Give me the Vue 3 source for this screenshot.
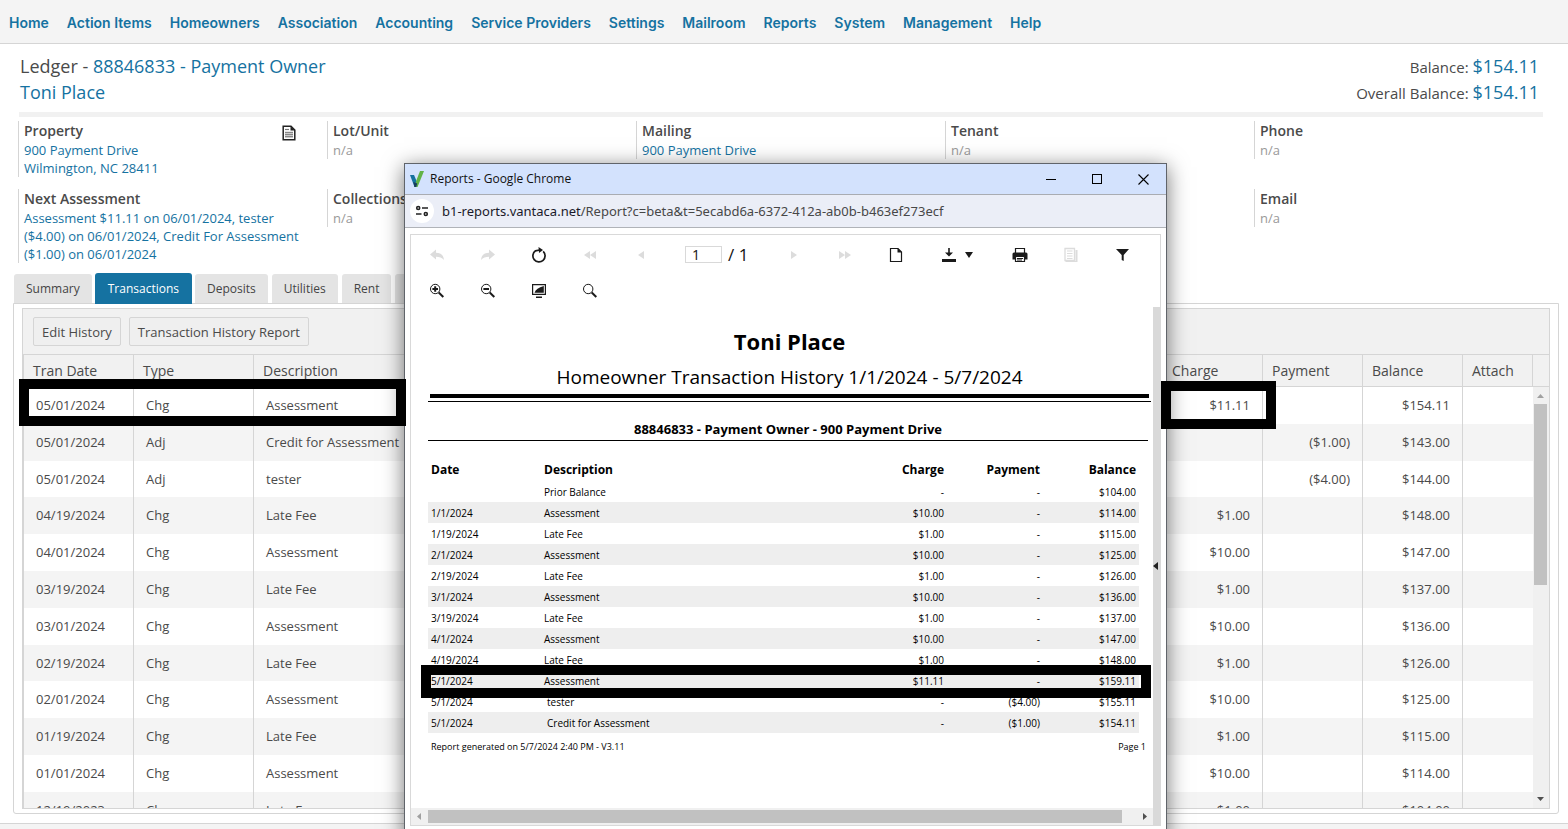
<script setup>
const nav = ['Home', 'Action Items', 'Homeowners', 'Association', 'Accounting', 'Service Providers', 'Settings', 'Mailroom', 'Reports', 'System', 'Management', 'Help']
const tabs = ['Summary', 'Transactions', 'Deposits', 'Utilities', 'Rent', 'Notes']

const info = [
  { title: 'Property', links: ['900 Payment Drive', 'Wilmington, NC 28411'], icon: true },
  { title: 'Lot/Unit' },
  { title: 'Mailing', links: ['900 Payment Drive'] },
  { title: 'Tenant' },
  { title: 'Phone' },
  { title: 'Next Assessment', links: ['Assessment $11.11 on 06/01/2024, tester ($4.00) on 06/01/2024, Credit For Assessment ($1.00) on 06/01/2024'] },
  { title: 'Collections' },
  {},
  {},
  { title: 'Email' },
]

const rows = [
  ['05/01/2024', 'Chg', 'Assessment', '$11.11', '', '$154.11'],
  ['05/01/2024', 'Adj', 'Credit for Assessment', '', '($1.00)', '$143.00'],
  ['05/01/2024', 'Adj', 'tester', '', '($4.00)', '$144.00'],
  ['04/19/2024', 'Chg', 'Late Fee', '$1.00', '', '$148.00'],
  ['04/01/2024', 'Chg', 'Assessment', '$10.00', '', '$147.00'],
  ['03/19/2024', 'Chg', 'Late Fee', '$1.00', '', '$137.00'],
  ['03/01/2024', 'Chg', 'Assessment', '$10.00', '', '$136.00'],
  ['02/19/2024', 'Chg', 'Late Fee', '$1.00', '', '$126.00'],
  ['02/01/2024', 'Chg', 'Assessment', '$10.00', '', '$125.00'],
  ['01/19/2024', 'Chg', 'Late Fee', '$1.00', '', '$115.00'],
  ['01/01/2024', 'Chg', 'Assessment', '$10.00', '', '$114.00'],
  ['12/19/2023', 'Chg', 'Late Fee', '$1.00', '', '$104.00'],
]

const report = [
  ['', 'Prior Balance', '-', '-', '$104.00'],
  ['1/1/2024', 'Assessment', '$10.00', '-', '$114.00'],
  ['1/19/2024', 'Late Fee', '$1.00', '-', '$115.00'],
  ['2/1/2024', 'Assessment', '$10.00', '-', '$125.00'],
  ['2/19/2024', 'Late Fee', '$1.00', '-', '$126.00'],
  ['3/1/2024', 'Assessment', '$10.00', '-', '$136.00'],
  ['3/19/2024', 'Late Fee', '$1.00', '-', '$137.00'],
  ['4/1/2024', 'Assessment', '$10.00', '-', '$147.00'],
  ['4/19/2024', 'Late Fee', '$1.00', '-', '$148.00'],
  ['5/1/2024', 'Assessment', '$11.11', '-', '$159.11'],
  ['5/1/2024', 'tester', '-', '($4.00)', '$155.11', true],
  ['5/1/2024', 'Credit for Assessment', '-', '($1.00)', '$154.11', true],
]
</script>

<template>
  <div class="page">
    <nav class="nav">
      <a v-for="n in nav" :key="n" href="#">{{ n }}</a>
    </nav>

    <header class="head">
      <div>
        <div class="big">Ledger - <a href="#">88846833 - Payment Owner</a></div>
        <div class="big"><a href="#">Toni Place</a></div>
      </div>
      <div class="totals">
        <div>Balance: <a href="#">$154.11</a></div>
        <div>Overall Balance: <a href="#">$154.11</a></div>
      </div>
    </header>

    <section class="info">
      <div v-for="(c, i) in info" :key="i" :class="{ cell: c.title }">
        <template v-if="c.title">
          <div class="cell-title">
            <span>{{ c.title }}</span>
            <button v-if="c.icon" class="doc" aria-label="Property document">
              <svg width="14" height="16" viewBox="0 0 14 16"><path d="M1.2 1.2H9L12.8 5V14.8H1.2Z" fill="#fff" stroke="#222" stroke-width="1.5" /><path d="M8.5 1V5.5H13Z" fill="#222" /><path d="M3 4.5H7" stroke="#777" stroke-width="1.2" /><path d="M3 6.5H11V13H3Z" fill="#ccc" /><path d="M3 7.5H11M3 9.5H11M3 11.5H11" stroke="#888" /></svg>
            </button>
          </div>
          <template v-if="c.links"><a v-for="l in c.links" :key="l" href="#">{{ l }}</a></template>
          <span v-else class="na">n/a</span>
        </template>
      </div>
    </section>

    <div class="tabs">
      <button v-for="t in tabs" :key="t" :class="{ active: t === 'Transactions' }">{{ t }}</button>
    </div>

    <main class="panel">
      <div class="grid">
        <div class="toolbar">
          <button>Edit History</button>
          <button>Transaction History Report</button>
        </div>
        <div class="grid-body">
          <div class="clip">
            <table class="ledger">
              <colgroup><col class="c110"><col class="c120"><col><col class="c100"><col class="c100"><col class="c100"><col class="c70"></colgroup>
              <thead>
                <tr><th>Tran Date</th><th>Type</th><th>Description</th><th>Charge</th><th>Payment</th><th>Balance</th><th>Attach</th></tr>
              </thead>
              <tbody>
                <tr v-for="(r, i) in rows" :key="i">
                  <td v-for="(v, j) in r" :key="j" :class="{ num: j > 2 }">{{ v }}</td>
                  <td></td>
                </tr>
              </tbody>
            </table>
          </div>
          <div class="vscroll">
            <div class="vhead"></div>
            <div class="vtrack">
              <svg width="16" height="17" viewBox="0 0 16 17"><path d="M4 11H11L7.5 7Z" fill="#a0a0a0" /></svg>
              <div class="vthumb"></div>
              <svg width="16" height="17" viewBox="0 0 16 17"><path d="M4 6H11L7.5 10Z" fill="#505050" /></svg>
            </div>
          </div>
        </div>
      </div>
    </main>
    <footer class="foot"></footer>

    <section class="win">
      <div class="win-title">
        <svg width="16" height="18" viewBox="0 0 16 18"><path d="M1 5H5L8 12L7 17H5.5Z" fill="#15719f" /><path d="M11 1H15L8.5 17H5.5L7.5 10Z" fill="#62b346" /><path d="M4.4 12L8.3 13.5L7.2 17H5.4Z" fill="#173c5c" /></svg>
        <span>Reports - Google Chrome</span>
        <div class="win-btns">
          <button aria-label="Minimize"><svg width="11" height="11"><path d="M0 5.5H10" stroke="#000" /></svg></button>
          <button aria-label="Maximize"><svg width="11" height="11"><rect x=".5" y=".5" width="9" height="9" fill="none" stroke="#000" /></svg></button>
          <button aria-label="Close"><svg width="11" height="11"><path d="M.5 .5L10.5 10.5M10.5 .5L.5 10.5" stroke="#000" stroke-width="1.1" /></svg></button>
        </div>
      </div>
      <div class="addr">
        <span class="site"><svg width="14" height="12" viewBox="0 0 14 12" fill="none" stroke="#222" stroke-width="1.6"><circle cx="3.2" cy="3" r="1.5" /><path d="M7 3H13M1 9H6.5" /><circle cx="10.8" cy="9" r="1.5" /></svg></span>
        <span><span class="host">b1-reports.vantaca.net</span>/Report?c=beta&amp;t=5ecabd6a-6372-412a-ab0b-b463ef273ecf</span>
      </div>

      <div class="viewer">
        <div class="tools">
          <button class="off" aria-label="Back"><svg width="16" height="16" viewBox="0 0 16 16"><path d="M1 7.5L7 2.5V5.7C11.5 5.7 14.5 8 15 13C13 10.5 10.5 9.7 7 9.7V12.5Z" /></svg></button>
          <button class="off" aria-label="Forward"><svg width="16" height="16" viewBox="0 0 16 16"><path d="M15 7.5L9 2.5V5.7C4.5 5.7 1.5 8 1 13C3 10.5 5.5 9.7 9 9.7V12.5Z" /></svg></button>
          <button aria-label="Refresh"><svg width="16" height="16" viewBox="0 0 16 16"><path d="M12.2 4.4A6.1 6.1 0 1 1 4.5 3.8L8.5 3" fill="none" stroke="#1a1a1a" stroke-width="1.7" /><path d="M7.5 0L12 3L8 6Z" /></svg></button>
          <button class="off" aria-label="First page"><svg width="16" height="16" viewBox="0 0 16 16"><path d="M8 4V12L2 8ZM14 4V12L8 8Z" /></svg></button>
          <button class="off" aria-label="Previous page"><svg width="16" height="16" viewBox="0 0 16 16"><path d="M11 4V12L5 8Z" /></svg></button>
          <label class="pager"><input type="text" value="1" aria-label="Page number"><span>/ 1</span></label>
          <button class="off" aria-label="Next page"><svg width="16" height="16" viewBox="0 0 16 16"><path d="M5 4V12L11 8Z" /></svg></button>
          <button class="off" aria-label="Last page"><svg width="16" height="16" viewBox="0 0 16 16"><path d="M2 4V12L8 8ZM8 4V12L14 8Z" /></svg></button>
          <button aria-label="Page view"><svg width="16" height="16" viewBox="0 0 16 16"><path d="M2.5 1.5H10L13.5 5V14.5H2.5Z" fill="none" stroke="#1a1a1a" stroke-width="1.2" /><path d="M9.5 1V5.5H14Z" /></svg></button>
          <button class="wide" aria-label="Export"><svg width="16" height="16" viewBox="0 0 16 16"><path d="M7.2 1H8.8V5.5H12L8 9.5L4 5.5H7.2ZM1 12H15V15H1Z" /></svg><svg width="12" height="16" viewBox="0 0 12 16"><path d="M2 5H10L6 11Z" /></svg></button>
          <button aria-label="Print"><svg width="16" height="16" viewBox="0 0 16 16"><path d="M3.5 6V1.5H12.5V6" fill="none" stroke="#1a1a1a" stroke-width="1.2" /><path d="M2 5.5H14Q15.5 5.5 15.5 7V12.5H.5V7Q.5 5.5 2 5.5Z" /><path d="M3.5 9.5H12.5V14.5H3.5Z" fill="#fff" stroke="#1a1a1a" stroke-width="1.2" /><path d="M5 11.5H11M5 13H10" stroke="#1a1a1a" /></svg></button>
          <button class="off" aria-label="Document map"><svg width="16" height="16" viewBox="0 0 16 16"><path d="M2 1.5H11.5V13.5H2Z" fill="none" stroke="#dcdcdc" stroke-width="1.3" /><path d="M4 4H9.5M4 6.5H9.5M4 9H9.5M4 11.5H9.5" stroke="#dcdcdc" stroke-width="1.2" /><path d="M12.5 3H14.5V15H2.5V14H12.5Z" /></svg></button>
          <button aria-label="Filter"><svg width="16" height="16" viewBox="0 0 16 16"><path d="M2 2H15L9.7 8V14L7.7 13V8Z" /></svg></button>
        </div>
        <div class="tools second">
          <button aria-label="Zoom in"><svg width="16" height="16" viewBox="0 0 16 16"><circle cx="6.2" cy="6" r="4.7" fill="none" stroke="#1a1a1a" /><path d="M3.4 6H9M6.2 3.2V8.8" stroke="#1a1a1a" stroke-width="2" /><path d="M9.7 9.5L14.3 14" stroke="#1a1a1a" stroke-width="2" /></svg></button>
          <button aria-label="Zoom out"><svg width="16" height="16" viewBox="0 0 16 16"><circle cx="6.2" cy="6" r="4.7" fill="none" stroke="#1a1a1a" /><path d="M3.4 6H9" stroke="#1a1a1a" stroke-width="2" /><path d="M9.7 9.5L14.3 14" stroke="#1a1a1a" stroke-width="2" /></svg></button>
          <button aria-label="Full screen"><svg width="16" height="16" viewBox="0 0 16 16"><path d="M1.6 1.6H14.4V11.4H1.6Z" fill="none" stroke="#1a1a1a" stroke-width="1.2" /><path d="M3.5 9.8Q5 5 12.8 3V9.8ZM5 13.5H11V15H5Z" /></svg></button>
          <button aria-label="Search"><svg width="16" height="16" viewBox="0 0 16 16"><circle cx="6.2" cy="6" r="4.7" fill="none" stroke="#1a1a1a" /><path d="M9.7 9.5L14.3 14" stroke="#1a1a1a" stroke-width="2" /></svg></button>
        </div>

        <div class="sheet">
          <div class="doc-page">
            <h1>Toni Place</h1>
            <h2>Homeowner Transaction History 1/1/2024 - 5/7/2024</h2>
            <div class="thick"></div>
            <div class="thin"></div>
            <h3>88846833 - Payment Owner - 900 Payment Drive</h3>
            <table class="report">
              <colgroup><col class="c113"><col><col class="c100"><col class="c96"><col class="c96"></colgroup>
              <thead><tr><th>Date</th><th>Description</th><th class="num">Charge</th><th class="num">Payment</th><th class="num">Balance</th></tr></thead>
              <tbody>
                <tr v-for="(r, i) in report" :key="i">
                  <td>{{ r[0] }}</td>
                  <td :class="{ indent: r[5] }">{{ r[1] }}</td>
                  <td class="num">{{ r[2] }}</td>
                  <td class="num">{{ r[3] }}</td>
                  <td class="num">{{ r[4] }}</td>
                </tr>
              </tbody>
            </table>
            <div class="doc-foot"><span>Report generated on 5/7/2024 2:40 PM - V3.11</span><span>Page 1</span></div>
            <div class="mark mark-report"></div>
          </div>
          <div class="hscroll">
            <svg width="17" height="17" viewBox="0 0 17 17"><path d="M10 5V12L6 8.5Z" fill="#a0a0a0" /></svg>
            <div class="hthumb"></div>
            <svg width="17" height="17" viewBox="0 0 17 17"><path d="M7 5V12L11 8.5Z" fill="#505050" /></svg>
          </div>
          <div class="splitter"><svg width="6" height="8" viewBox="0 0 6 8"><path d="M5 0V8L0 4Z" fill="#222" /></svg></div>
        </div>
      </div>
    </section>

    <div class="mark mark-row"></div>
    <div class="mark mark-charge"></div>
  </div>
</template>

<style>
body { margin: 0; overflow: hidden; }
</style>

<style scoped>
* { box-sizing: border-box; }
.page { position: relative; height: 100vh; overflow: hidden; display: flex; flex-direction: column; background: #fff; color: #4a4a4a; font: 13px/18px "Open Sans", "Noto Sans", sans-serif; }
a { color: #1572a1; text-decoration: none; }
button { font: inherit; color: inherit; border: 0; background: none; padding: 0; margin: 0; }
.nav { display: flex; align-items: center; gap: 18px; height: 44px; flex: none; padding: 2px 0 0 9px; background: #f4f4f4; border-bottom: 1px solid #d5d5d5; }
.nav a { font: 600 14px/20px Inter, sans-serif; white-space: nowrap; }
.head { display: flex; justify-content: space-between; margin: 0 25px 0 19px; padding: 9px 4px 7px 1px; line-height: 26px; border-bottom: 5px solid #f1f1f1; }
.big, .totals a { font-size: 18px; }
.totals { font-size: 15px; text-align: right; }
.totals div { height: 26px; }
.info { display: grid; grid-template-columns: repeat(5, 1fr); row-gap: 12px; align-items: start; margin: 4px 5px 0 18px; }
.cell { border-left: 1px solid #d5d5d5; padding-left: 5px; }
.cell > a { display: block; max-width: 284px; }
.cell-title { display: flex; justify-content: space-between; padding-right: 31px; font-size: 14px; line-height: 20px; font-weight: 600; }
.doc { height: 20px; display: flex; align-items: center; padding-top: 4px; }
.na { display: block; color: #999; }
.tabs { position: relative; display: flex; align-items: flex-end; gap: 4px; height: 31px; flex: none; margin: 10px 0 0 14px; }
.tabs button { height: 29px; padding: 0 12px; background: #e4e4e4; border-radius: 3px 3px 0 0; font-size: 12px; line-height: 29px; color: #444; margin-bottom: 1px; }
.tabs .active { height: 31px; padding: 0 13px; margin: 0 -1px; background: #1572a1; color: #fff; }
.panel { flex: 1; min-height: 0; display: flex; margin: -1px 9px 9px 13px; padding: 4px 8px; border: 1px solid #d5d5d5; border-radius: 0 0 3px 3px; }
.grid { flex: 1; min-width: 0; display: flex; flex-direction: column; border: 1px solid #d5d5d5; }
.toolbar { display: flex; gap: 8px; padding: 8px 10px; height: 46px; flex: none; background: #f1f1f1; border-bottom: 1px solid #d5d5d5; }
.toolbar button { height: 29px; padding: 0 8px; border: 1px solid #d5d5d5; border-radius: 2px; background: #efefef; }
.grid-body { flex: 1; min-height: 0; display: flex; border-left: 1px solid #d5d5d5; }
.clip { flex: 1; min-width: 0; overflow: hidden; }
table { width: 100%; table-layout: fixed; border-collapse: separate; border-spacing: 0; }
.c110 { width: 110px; } .c120 { width: 120px; } .c100 { width: 100px; } .c70 { width: 70px; }
.c113 { width: 113px; } .c96 { width: 96px; }
th { text-align: left; }
.ledger th { height: 32px; padding: 0 9px; background: #f1f1f1; font-size: 14px; font-weight: 400; border-right: 1px solid #d5d5d5; border-bottom: 1px solid #d5d5d5; }
.ledger td { padding: 8px 12px; line-height: 1.6; border-right: 1px solid #d5d5d5; white-space: nowrap; }
.ledger td:last-child { border-right: 0; }
.ledger tbody tr:nth-child(even) { background: #f4f4f4; }
.num { text-align: right !important; }
.vscroll { width: 16px; display: flex; flex-direction: column; }
.vhead { height: 32px; flex: none; background: #f1f1f1; border-bottom: 1px solid #d5d5d5; }
.vtrack { flex: 1; min-height: 0; display: flex; flex-direction: column; background: #f0f0f0; }
.vtrack svg { flex: none; }
.vthumb { height: 43%; margin: 0 2px auto 1px; background: #c1c1c1; }
.foot { height: 6px; flex: none; background: #f4f4f4; border-top: 1px solid #d5d5d5; }

.win { position: absolute; left: 404px; top: 163px; bottom: -10px; width: 763px; display: flex; flex-direction: column; background: #fff; border: 1px solid #60646a; box-shadow: 0 4px 20px rgba(0, 0, 0, 0.55); color: #111; }
.win-title { display: flex; align-items: center; gap: 5px; height: 31px; flex: none; padding-left: 4px; background: #d3e2fd; border-bottom: 1px solid #a9acb2; font-size: 12px; }
.win-btns { display: flex; margin-left: auto; }
.win-btns button { width: 46px; display: flex; justify-content: center; }
.addr { display: flex; align-items: center; gap: 8px; height: 33px; flex: none; padding-left: 5px; background: #ebeef7; border-bottom: 1px solid #b0b3b8; color: #474747; font-family: "Noto Sans", sans-serif; }
.site { width: 24px; height: 24px; border-radius: 50%; background: #fff; display: flex; align-items: center; justify-content: center; }
.host { color: #1a1a2a; }
.viewer { flex: 1; display: flex; flex-direction: column; margin: 6px 5px 12px; border: 1px solid #d9d9d9; }
.tools { display: flex; align-items: center; height: 39px; flex: none; }
.second { height: 33px; }
.tools button { width: 51px; display: flex; align-items: center; justify-content: center; fill: #1a1a1a; }
.tools .off { fill: #dcdcdc; }
.tools .wide { width: 73px; gap: 6px; }
.pager { display: flex; align-items: center; gap: 6px; width: 102px; padding-left: 19px; font-size: 17px; }
.pager input { width: 37px; height: 17px; padding: 0 6px; border: 1px solid #d9d9d9; font: inherit; font-size: 14px; color: #111; border-radius: 0; }
.sheet { flex: 1; min-height: 0; display: grid; grid-template: 1fr 17px / 1fr 7px; }
.doc-page { position: relative; padding: 19px 2px 0 17px; color: #000; }
h1, h2, h3 { margin: 0; text-align: center; }
h1 { font-size: 22px; line-height: 30px; }
h2 { font-size: 19px; line-height: 26px; padding: 8px 0 2px; font-weight: 400; }
.thick { height: 4px; margin: 2px 2px 3px; background: #000; }
.thin { height: 1px; background: #000; }
h3 { font-size: 13px; line-height: 20px; padding: 17px 0 1px; margin-right: 3px; border-bottom: 1px solid #000; }
.report { width: calc(100% - 12px); margin-top: 17px; font-size: 10px; line-height: 19px; }
.report td { padding: 2px 3px 0; height: 21px; }
.report th { padding: 0 3px; font-size: 12px; height: 23px; }
.report tbody tr:nth-child(even) { background: #eee; }
.report .indent { padding-left: 6px; }
.doc-foot { display: flex; justify-content: space-between; padding: 5px 5px 0 3px; font-size: 9px; }
.hscroll { grid-column: 1; display: flex; background: #f0f0f0; }
.hscroll svg { flex: none; }
.hthumb { flex: 1; margin: 2px 14px 2px 0; background: #c1c1c1; }
.splitter { grid-column: 2; grid-row: 1 / 3; display: flex; align-items: center; background: #d9d9d9; }

.mark { position: absolute; border: 10px solid #000; pointer-events: none; }
.mark-row { left: 19px; top: 379px; width: 387px; height: 47px; }
.mark-charge { left: 1161px; top: 381px; width: 115px; height: 48px; }
.mark-report { left: 10px; right: 2px; top: 358px; height: 33px; }
</style>
